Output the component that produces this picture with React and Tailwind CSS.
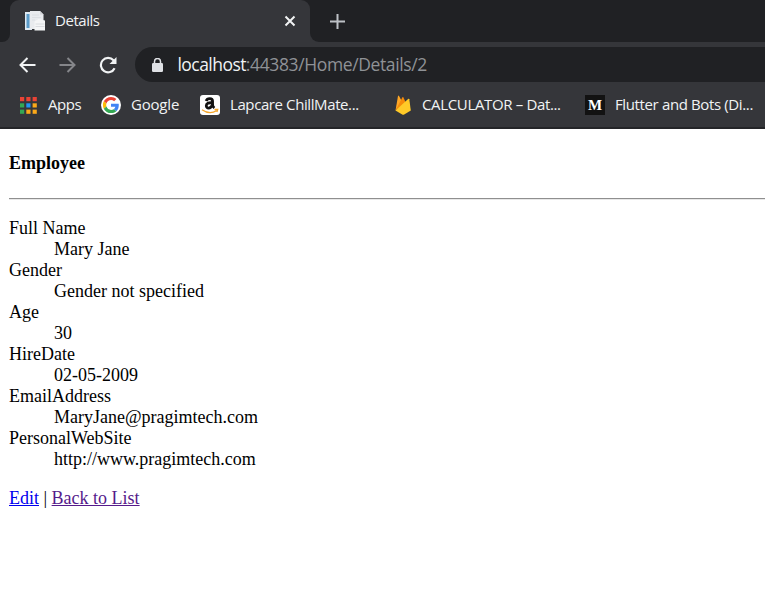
import React from "react";

const details = [
  ["Full Name", "Mary Jane"],
  ["Gender", "Gender not specified"],
  ["Age", "30"],
  ["HireDate", "02-05-2009"],
  ["EmailAddress", "MaryJane@pragimtech.com"],
  ["PersonalWebSite", "http://www.pragimtech.com"],
];

function PageIcon() {
  return (
    <svg width="20" height="20" viewBox="0 0 20 20">
      <path d="M0 1h7v18H0z" fill="#dfeaf2" />
      <path d="M1.500 3h3v14h-3z" fill="#5b9bc8" />
      <path d="M5 0h10l3.500 3.500V18H5z" fill="#e9ebee" />
      <path d="M15 0v3.500h3.500z" fill="#d3d6da" />
      <path d="M7 4h7M7 6.500h9M7 9h3" stroke="#dcdfe3" strokeWidth="1" />
      <path d="M9.500 10.500l4-2.500 6.500 1.500v10H9.500z" fill="#f4f5f6" />
      <path d="M10.500 13h9M10.500 15.500h9" stroke="#d3d6da" strokeWidth=".8" />
    </svg>
  );
}

function AppsIcon() {
  const colors = ["#ea4335", "#ea4335", "#ea4335", "#34a853", "#2196f3", "#fba919", "#34a853", "#fba919", "#fba919"];
  return (
    <svg width="17" height="17" viewBox="0 0 17 17">
      {colors.map((c, i) => (
        <rect key={i} x={(i % 3) * 6.3} y={Math.floor(i / 3) * 6.3} width="4.200" height="4.200" fill={c} />
      ))}
    </svg>
  );
}

function GoogleIcon() {
  return (
    <svg width="20" height="20" viewBox="0 0 20 20">
      <circle cx="10" cy="10" r="10" fill="#fff" />
      <g transform="translate(1.900 1.900) scale(.338)">
        <path fill="#EA4335" d="M24 9.500c3.540 0 6.710 1.220 9.210 3.600l6.850-6.850C35.900 2.380 30.470 0 24 0 14.620 0 6.510 5.380 2.560 13.220l7.980 6.190C12.430 13.720 17.740 9.500 24 9.500z" />
        <path fill="#4285F4" d="M46.980 24.550c0-1.570-.15-3.090-.38-4.550H24v9.020h12.940c-.58 2.960-2.260 5.480-4.780 7.180l7.730 6c4.510-4.180 7.090-10.360 7.090-17.650z" />
        <path fill="#FBBC05" d="M10.530 28.590A14.500 14.500 0 0 1 9.770 24c0-1.600.27-3.140.76-4.590l-7.980-6.190A23.900 23.900 0 0 0 0 24c0 3.880.92 7.540 2.560 10.780l7.970-6.190z" />
        <path fill="#34A853" d="M24 48c6.480 0 11.930-2.130 15.890-5.810l-7.730-6c-2.150 1.450-4.920 2.300-8.160 2.300-6.260 0-11.570-4.220-13.470-9.910l-7.980 6.190C6.510 42.620 14.620 48 24 48z" />
      </g>
    </svg>
  );
}

function AmazonIcon() {
  return (
    <svg width="20" height="20" viewBox="0 0 20 20">
      <rect width="20" height="20" rx="3" fill="#fff" />
      <path d="M12.500 10V6C12.500 4.200 11.500 3.600 9.800 3.600S6.700 4.300 6.200 6" fill="none" stroke="#111" strokeWidth="2.900" />
      <path d="M12 7.800C8.500 7.600 6.300 8.500 6.300 10.800c0 3.200 4.300 3 5.900-.4" fill="none" stroke="#111" strokeWidth="2.800" />
      <path d="M12.500 9c0 2.400.4 2.900 1.900 4" fill="none" stroke="#111" strokeWidth="2.700" />
      <path d="M2 14.800q7.500 5.200 14.500 1M14.500 14.500l3.200-.1-.8 2.600" fill="none" stroke="#f4a52a" strokeWidth="1.300" />
    </svg>
  );
}

function FirebaseIcon() {
  return (
    <svg width="16" height="20" viewBox="0 0 16 20">
      <path d="M.5 15.500L3 1q.4-1 1 0l3 5.500z" fill="#ffa726" />
      <path d="M.5 15.500L7.300 2.500q.6-.8 1.100 0l2.600 5.500z" fill="#f58a0a" />
      <path d="M.5 15.500L13.400 3.800q.7-.4.9.4l1.500 11.300-6.600 3.900q-1 .5-2 0z" fill="#ffca28" />
    </svg>
  );
}

function Bookmark({ icon, children, className, textClass }) {
  return (
    <div className={"flex shrink-0 items-center " + className}>
      {icon}
      <span className={"pb-[2px] whitespace-nowrap " + textClass}>{children}</span>
    </div>
  );
}

export default function App() {
  return (
    <div className="flex h-[599px] w-[765px] flex-col overflow-hidden bg-white">
      <header className="flex h-[129px] shrink-0 flex-col border-b-2 border-[#242528] bg-[#35363a] font-['Open_Sans','Noto_Sans',sans-serif] text-[15px] text-[#f1f3f4]">
        <div className="flex h-[42px] shrink-0 bg-[#35363a]">
          <div className="h-[42px] w-[10px] rounded-br-[8px] bg-[#202124]" />
          <div className="flex w-[300px] bg-[#202124]">
            <div className="flex w-full items-center rounded-t-[9px] bg-[#35363a] pl-[15px]">
              <PageIcon />
              <span className="ml-[10px] w-[229px] shrink-0 pb-[2px] tracking-[-0.450px]">Details</span>
              <svg className="shrink-0" width="12" height="12" viewBox="0 0 12 12" stroke="#f1f3f4" strokeWidth="2">
                <path d="M1.500 1.500l9 9M10.500 1.500l-9 9" />
              </svg>
            </div>
          </div>
          <div className="flex flex-1 items-center rounded-bl-[9px] bg-[#202124] pl-5">
            <svg width="15" height="15" viewBox="0 0 15 15" stroke="#bdc1c6" strokeWidth="2">
              <path d="M7.500 0v15M0 7.500h15" />
            </svg>
          </div>
        </div>
        <div className="flex h-[45px] shrink-0 items-center pl-[19px]">
          <svg width="17" height="16" viewBox="0 0 17 16" fill="none" stroke="#f1f3f4" strokeWidth="2">
            <path d="M16.500 8H2M8.500 1L1.500 8l7 7" />
          </svg>
          <svg className="ml-[23px]" width="17" height="16" viewBox="0 0 17 16" fill="none" stroke="#85868a" strokeWidth="2">
            <path d="M.5 8H15M8.500 1l7 7-7 7" />
          </svg>
          <svg className="ml-[23px]" width="19" height="18" viewBox="0 0 19 18" fill="none" stroke="#f1f3f4" strokeWidth="2.200">
            <path d="M15.600 12.200A7.200 7.200 0 1 1 14.500 4.300l1.200 1.200" />
            <path d="M17.500 1v7h-7z" fill="#f1f3f4" stroke="none" />
          </svg>
          <div className="ml-[17px] flex h-[35px] flex-1 items-center rounded-l-full bg-[#202124] pl-[17px]">
            <svg width="11" height="14" viewBox="0 0 11 14">
              <path d="M2.500 6V3.500a3 3 0 0 1 6 0V6" fill="none" stroke="#dfe1e5" strokeWidth="1.500" />
              <rect y="5" width="11" height="9" rx="1.200" fill="#dfe1e5" />
            </svg>
            <div className="ml-[14.500px] text-[17.500px] whitespace-nowrap text-[#8f9296]">
              <span className="tracking-[-0.550px] text-[#f1f3f4]">localhost</span>
              <span className="tracking-[-0.380px]">:44383/Home/Details/2</span>
            </div>
          </div>
        </div>
        <div className="flex h-[36px] shrink-0 items-center pl-5">
          <Bookmark icon={<AppsIcon />} className="w-[81px]" textClass="ml-[11px] tracking-[-0.450px]">Apps</Bookmark>
          <Bookmark icon={<GoogleIcon />} className="w-[99px]" textClass="ml-[10px] tracking-[-0.200px]">Google</Bookmark>
          <Bookmark icon={<AmazonIcon />} className="w-[195px]" textClass="ml-[10px] tracking-[-0.400px]">Lapcare ChillMate...</Bookmark>
          <Bookmark icon={<FirebaseIcon />} className="w-[190px]" textClass="ml-[11px] tracking-[-0.350px]">CALCULATOR – Dat...</Bookmark>
          <Bookmark
            icon={<div className="flex size-5 items-center justify-center bg-[#121212] font-['Liberation_Serif',serif] text-[15px] leading-none font-bold text-white">M</div>}
            className="w-[180px]"
            textClass="ml-[10px] tracking-[-0.370px]"
          >Flutter and Bots (Di...</Bookmark>
        </div>
      </header>
      <main className="pl-[9px] font-['Liberation_Serif','Times_New_Roman',serif] text-[18px] leading-[21px] text-black">
        <h4 className="mt-6 font-bold">Employee</h4>
        <hr className="mt-6 h-[2px] border-t border-b border-t-[#8f8f8f] border-b-[#e8e8e8]" />
        <dl className="mt-[18px]">
          {details.map(([label, value]) => (
            <React.Fragment key={label}>
              <dt>{label}</dt>
              <dd className="ml-[45px]">{value}</dd>
            </React.Fragment>
          ))}
        </dl>
        <div className="mt-[18px]">
          <a className="text-[#0000ee] underline" href="#edit">Edit</a> | <a className="text-[#551a8b] underline" href="#list">Back to List</a>
        </div>
      </main>
    </div>
  );
}
